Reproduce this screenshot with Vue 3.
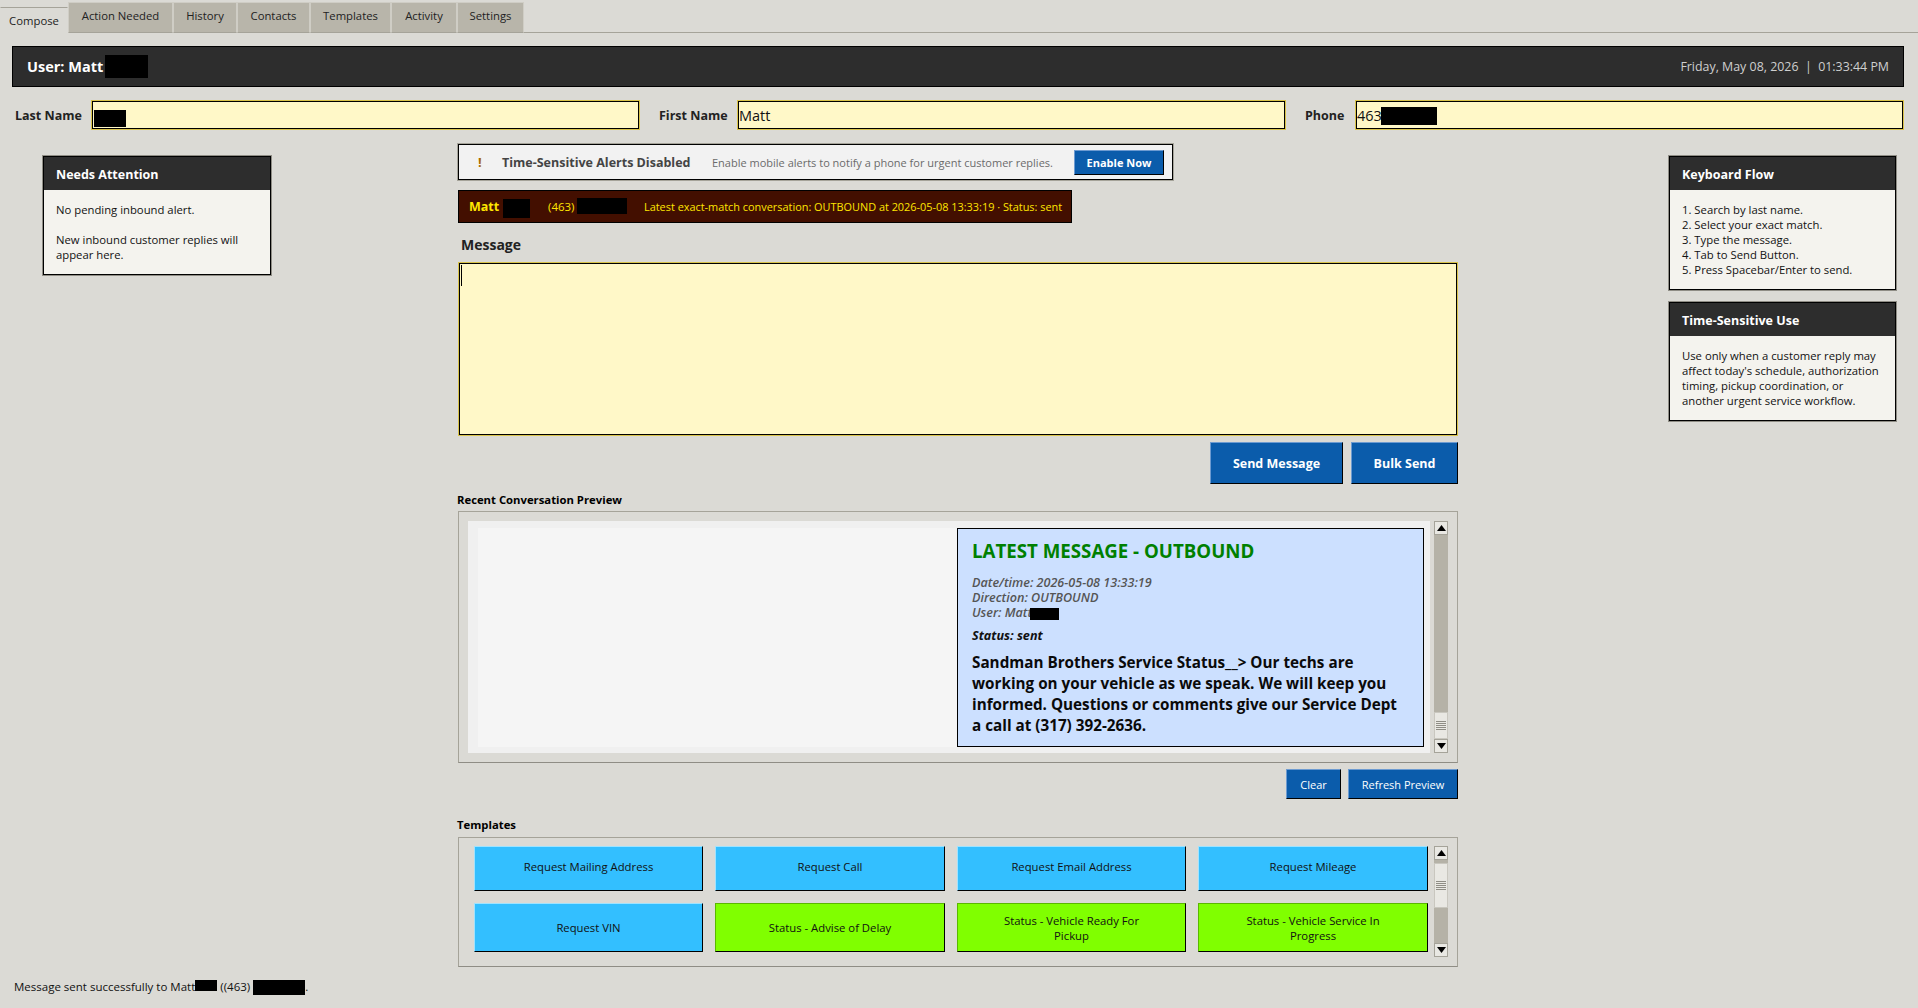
<template>
  <div class="page">
    <div class="tabs">
      <div
        v-for="tab in tabs"
        :key="tab.name"
        class="tab"
        :class="{ active: tab.name === activeTab }"
        :style="{ width: tab.width + 'px' }"
        @click="activeTab = tab.name"
      >{{ tab.name }}</div>
    </div>

    <div class="content">
      <div class="user-bar">
        <div class="user-name">User: Matt<span class="redact user-redact"></span></div>
        <div class="clock">Friday, May 08, 2026&nbsp; |&nbsp; 01:33:44 PM</div>
      </div>

      <div class="fields">
        <label class="field-label last-label">Last Name</label>
        <div class="field last-field">
          <input class="field-input" type="text" value="">
          <span class="redact last-redact"></span>
        </div>
        <label class="field-label first-label">First Name</label>
        <div class="field first-field">
          <input class="field-input" type="text" value="Matt">
        </div>
        <label class="field-label phone-label">Phone</label>
        <div class="field phone-field">
          <input class="field-input" type="text" value="463">
          <span class="redact phone-redact"></span>
        </div>
      </div>

      <div class="body">
        <aside class="left-col">
          <section class="panel">
            <h3 class="panel-title">Needs Attention</h3>
            <div class="panel-body attention-body">
              <p>No pending inbound alert.</p>
              <p>New inbound customer replies will appear here.</p>
            </div>
          </section>
        </aside>

        <main class="center-col">
          <div class="alert-bar">
            <span class="alert-mark">!</span>
            <span class="alert-title">Time-Sensitive Alerts Disabled</span>
            <span class="alert-text">Enable mobile alerts to notify a phone for urgent customer replies.</span>
            <button class="btn enable-btn">Enable Now</button>
          </div>

          <div class="match-bar">
            <span class="match-name">Matt</span>
            <span class="redact match-redact-a"></span>
            <span class="match-phone">(463)</span>
            <span class="redact match-redact-b"></span>
            <span class="match-info">Latest exact-match conversation: OUTBOUND at 2026-05-08 13:33:19 · Status: sent</span>
          </div>

          <div class="message-label">Message</div>
          <div class="message-wrap">
            <textarea class="message-input"></textarea>
            <span class="caret"></span>
          </div>

          <div class="send-row">
            <button class="btn send-btn">Send Message</button>
            <button class="btn bulk-btn">Bulk Send</button>
          </div>

          <div class="section-label recent-label">Recent Conversation Preview</div>
          <div class="preview-box">
            <div class="preview-view">
              <div class="preview-inner">
                <div class="message-card">
                  <div class="card-title">LATEST MESSAGE - OUTBOUND</div>
                  <div class="card-meta">Date/time: 2026-05-08 13:33:19</div>
                  <div class="card-meta">Direction: OUTBOUND</div>
                  <div class="card-meta">User: Matt<span class="redact card-redact"></span></div>
                  <div class="card-status">Status: sent</div>
                  <div class="card-text">Sandman Brothers Service Status__&gt; Our techs are working on your vehicle as we speak. We will keep you informed. Questions or comments give our Service Dept a call at (317) 392-2636.</div>
                </div>
              </div>
            </div>
            <div class="scrollbar preview-scroll">
              <div class="sb-arrow">
                <svg width="9" height="6" viewBox="0 0 9 6"><path d="M4.5 0L9 6H0z" /></svg>
              </div>
              <div class="sb-track" style="flex: 178 0 0"></div>
              <div class="sb-thumb" style="flex: 25 0 0">
                <i></i><i></i><i></i><i></i><i></i>
              </div>
              <div class="sb-arrow">
                <svg width="9" height="6" viewBox="0 0 9 6"><path d="M0 0H9L4.5 6z" /></svg>
              </div>
            </div>
          </div>

          <div class="preview-actions">
            <button class="btn small-btn clear-btn">Clear</button>
            <button class="btn small-btn refresh-btn">Refresh Preview</button>
          </div>

          <div class="section-label templates-label">Templates</div>
          <div class="templates-box">
            <div class="templates-grid">
              <button
                v-for="t in templates"
                :key="t.label"
                class="template-btn"
                :class="t.kind"
              >{{ t.label }}</button>
            </div>
            <div class="scrollbar templates-scroll">
              <div class="sb-arrow">
                <svg width="9" height="6" viewBox="0 0 9 6"><path d="M4.5 0L9 6H0z" /></svg>
              </div>
              <div class="sb-track" style="flex: 3 0 0"></div>
              <div class="sb-thumb" style="flex: 44 0 0">
                <i></i><i></i><i></i><i></i><i></i>
              </div>
              <div class="sb-track" style="flex: 36 0 0"></div>
              <div class="sb-arrow">
                <svg width="9" height="6" viewBox="0 0 9 6"><path d="M0 0H9L4.5 6z" /></svg>
              </div>
            </div>
          </div>
        </main>

        <aside class="right-col">
          <section class="panel">
            <h3 class="panel-title">Keyboard Flow</h3>
            <div class="panel-body">
              <div v-for="step in steps" :key="step">{{ step }}</div>
            </div>
          </section>
          <section class="panel">
            <h3 class="panel-title">Time-Sensitive Use</h3>
            <div class="panel-body">
              Use only when a customer reply may<br>
              affect today's schedule, authorization<br>
              timing, pickup coordination, or<br>
              another urgent service workflow.
            </div>
          </section>
        </aside>
      </div>

      <div class="status-line">
        Message sent successfully to Matt<span class="redact status-redact-a"></span> ((463) <span class="redact status-redact-b"></span>.
      </div>
    </div>
  </div>
</template>

<script setup>
import { ref } from 'vue'

const activeTab = ref('Compose')

const tabs = [
  { name: 'Compose', width: 68 },
  { name: 'Action Needed', width: 105 },
  { name: 'History', width: 64 },
  { name: 'Contacts', width: 73 },
  { name: 'Templates', width: 81 },
  { name: 'Activity', width: 66 },
  { name: 'Settings', width: 67 }
]

const steps = [
  '1. Search by last name.',
  '2. Select your exact match.',
  '3. Type the message.',
  '4. Tab to Send Button.',
  '5. Press Spacebar/Enter to send.'
]

const templates = [
  { label: 'Request Mailing Address', kind: 'blue' },
  { label: 'Request Call', kind: 'blue' },
  { label: 'Request Email Address', kind: 'blue' },
  { label: 'Request Mileage', kind: 'blue' },
  { label: 'Request VIN', kind: 'blue' },
  { label: 'Status - Advise of Delay', kind: 'green' },
  { label: 'Status - Vehicle Ready For Pickup', kind: 'green' },
  { label: 'Status - Vehicle Service In Progress', kind: 'green' }
]
</script>

<style>
html, body {
  margin: 0;
  background: #dbdad5;
}
</style>

<style scoped>
* {
  box-sizing: border-box;
}

.page {
  width: 1918px;
  height: 1008px;
  overflow: hidden;
  background: #dbdad5;
  font-family: "Open Sans", "Noto Sans", sans-serif;
  font-size: 11.3px;
  color: #111;
}

/* Tabs */
.tabs {
  display: flex;
  align-items: flex-end;
  height: 33px;
  border-bottom: 1px solid #a5a399;
}

.tab {
  height: 31px;
  margin-bottom: -1px;
  padding-bottom: 4px;
  display: flex;
  align-items: center;
  justify-content: center;
  background: #b8b5aa;
  border: 1px solid #cfcdc5;
  border-bottom-color: #a5a399;
  color: #222;
  cursor: pointer;
}

.tab.active {
  height: 26px;
  padding-bottom: 0;
  background: #dbdad5;
  border-color: #a5a399 transparent transparent;
  border-top-width: 1px;
}

.content {
  padding: 13px 14px 0 12px;
}

/* User bar */
.user-bar {
  height: 41px;
  display: flex;
  align-items: center;
  justify-content: space-between;
  padding: 0 14px;
  background: #2d2d2d;
  border: 1px solid #000;
  color: #fff;
}

.user-name {
  display: flex;
  align-items: center;
  font-size: 14.5px;
  font-weight: 700;
}

.user-redact {
  width: 43px;
  height: 23px;
  margin-left: 2px;
}

.clock {
  font-size: 12.4px;
  color: #cfcfcf;
}

.redact {
  display: inline-block;
  background: #000;
}

/* Search fields */
.fields {
  display: flex;
  align-items: center;
  height: 30px;
  margin-top: 13px;
}

.field-label {
  font-size: 12.5px;
  font-weight: 700;
  color: #222;
  white-space: nowrap;
}

.last-label {
  width: 79px;
  padding-left: 3px;
}

.first-label {
  width: 78px;
  margin-left: 19px;
}

.phone-label {
  width: 50px;
  margin-left: 19px;
}

.field {
  position: relative;
  height: 30px;
  width: 549px;
}

.field-input {
  width: 100%;
  height: 100%;
  padding: 0 1px;
  background: #fff8c8;
  border: 1px solid #000;
  outline: 1px solid #d9c34a;
  outline-offset: -1px;
  box-shadow: inset 0 0 0 1px #000;
  font-family: inherit;
  font-size: 14.5px;
  color: #111;
}

.field .redact {
  position: absolute;
}

.last-redact {
  left: 3px;
  top: 10px;
  width: 32px;
  height: 17px;
}

.phone-redact {
  left: 26px;
  top: 7px;
  width: 56px;
  height: 18px;
}

/* Body columns */
.body {
  display: grid;
  grid-template-columns: 446px 1000px 1fr;
  height: 823px;
  margin-top: 14px;
}

.left-col {
  padding: 12px 0 0 31px;
}

.left-col .panel {
  width: 228px;
}

.right-col {
  padding: 12px 0 0 211px;
  display: flex;
  flex-direction: column;
  gap: 12px;
}

.right-col .panel {
  width: 227px;
}

.panel {
  border: 1px solid #000;
  outline: 1px solid #8f8d85;
  background: #f4f3ee;
}

.panel-title {
  margin: 0;
  height: 33px;
  padding: 2px 12px 0;
  display: flex;
  align-items: center;
  background: #2d2d2d;
  color: #fff;
  font-size: 12.5px;
  font-weight: 700;
}

.panel-body {
  padding: 12px 12px 12px;
  line-height: 15px;
}

.panel-body p {
  margin: 0;
}

.attention-body p + p {
  margin-top: 15px;
}

/* Center column */
.center-col {
  display: flex;
  flex-direction: column;
  min-width: 0;
}

.alert-bar {
  width: 715px;
  height: 36px;
  display: flex;
  align-items: center;
  padding: 0 8px 0 19px;
  background: #f2f2f2;
  border: 1px solid #000;
  outline: 1px solid #a5a399;
}

.alert-mark {
  width: 24px;
  font-weight: 700;
  font-size: 13px;
  color: #a86a00;
}

.alert-title {
  width: 210px;
  font-size: 12.5px;
  font-weight: 700;
  color: #444;
  white-space: nowrap;
}

.alert-text {
  flex: 1;
  font-size: 11px;
  color: #6b6b6b;
  white-space: nowrap;
}

.btn {
  display: flex;
  align-items: center;
  justify-content: center;
  padding: 0;
  background: #0b5cab;
  border: 1px solid #000;
  border-top-color: #6d9bd1;
  border-left-color: #6d9bd1;
  color: #fff;
  font-family: inherit;
  font-weight: 700;
  cursor: pointer;
}

.enable-btn {
  width: 90px;
  height: 25px;
  font-size: 11px;
}

.match-bar {
  width: 614px;
  height: 33px;
  margin-top: 10px;
  display: flex;
  align-items: center;
  padding-left: 10px;
  background: #430f00;
  border: 1px solid #000;
  color: #ffe600;
  font-size: 10.9px;
  white-space: nowrap;
}

.match-name {
  width: 34px;
  font-size: 12.5px;
  font-weight: 700;
}

.match-redact-a {
  width: 27px;
  height: 19px;
  margin-right: 18px;
  margin-top: 4px;
}

.match-phone {
  width: 29px;
  font-size: 11.5px;
}

.match-redact-b {
  width: 50px;
  height: 16px;
  margin-right: 17px;
  margin-bottom: 2px;
}

.message-label {
  height: 39px;
  padding: 12px 0 0 3px;
  font-size: 14px;
  font-weight: 700;
  color: #222;
}

.message-wrap {
  position: relative;
  height: 174px;
}

.message-input {
  display: block;
  width: 100%;
  height: 100%;
  resize: none;
  background: #fff8c8;
  border: 1px solid #000;
  outline: 1px solid #d9c34a;
  outline-offset: -1px;
  box-shadow: inset 0 0 0 1px #000;
}

.caret {
  position: absolute;
  left: 3px;
  top: 3px;
  width: 1px;
  height: 21px;
  background: #000;
}

.send-row {
  display: flex;
  justify-content: flex-end;
  gap: 8px;
  margin-top: 6px;
}

.send-btn,
.bulk-btn {
  height: 42px;
  font-size: 12.5px;
}

.send-btn {
  width: 133px;
}

.bulk-btn {
  width: 107px;
}

.section-label {
  font-size: 11.3px;
  font-weight: 700;
  color: #000;
  margin-left: -1px;
}

.recent-label {
  height: 27px;
  padding-top: 8px;
}

.preview-box {
  height: 252px;
  display: flex;
  gap: 4px;
  padding: 9px;
  border: 1px solid #a5a399;
  border-bottom-color: #8f8d85;
}

.preview-view {
  flex: 1;
  padding: 7px 6px 6px 10px;
  background: #f0f0f0;
}

.preview-inner {
  height: 100%;
  display: flex;
  justify-content: flex-end;
  background: #f5f5f5;
}

.message-card {
  width: 467px;
  padding: 10px 14px 0;
  background: #cce0ff;
  border: 1px solid #000;
}

.card-title {
  font-size: 18.7px;
  font-weight: 700;
  line-height: 24px;
  color: #008000;
  white-space: nowrap;
}

.card-meta,
.card-status {
  font-size: 12.6px;
  font-style: italic;
  font-weight: 600;
  line-height: 15px;
  color: #555;
  white-space: nowrap;
}

.card-title + .card-meta {
  margin-top: 12px;
}

.card-redact {
  width: 29px;
  height: 12px;
  margin-left: -2px;
  vertical-align: middle;
}

.card-status {
  margin-top: 8px;
  font-weight: 700;
  color: #111;
}

.card-text {
  margin-top: 9px;
  font-size: 15.25px;
  font-weight: 700;
  line-height: 21px;
  color: #0a0a0a;
}

/* Scrollbars */
.scrollbar {
  width: 14px;
  flex: none;
  display: flex;
  flex-direction: column;
  background: #b5b2a7;
}

.sb-arrow {
  height: 14px;
  flex: none;
  display: flex;
  align-items: center;
  justify-content: center;
  background: #e9e8e3;
  border: 1px solid #a5a399;
}

.sb-arrow path {
  fill: #000;
}

.sb-track {
  min-height: 0;
}

.sb-thumb {
  display: flex;
  flex-direction: column;
  align-items: center;
  justify-content: center;
  gap: 1px;
  background: #e9e8e3;
  border: 1px solid #c9c7bf;
}

.sb-thumb i {
  display: block;
  width: 10px;
  height: 1px;
  background: #8f8d85;
}

.preview-actions {
  display: flex;
  justify-content: flex-end;
  gap: 7px;
  margin-top: 6px;
}

.small-btn {
  height: 30px;
  font-size: 11px;
  font-weight: 400;
}

.clear-btn {
  width: 55px;
}

.refresh-btn {
  width: 110px;
}

.templates-label {
  height: 38px;
  padding-top: 18px;
}

.templates-box {
  height: 130px;
  display: flex;
  gap: 6px;
  padding: 8px 9px 9px 15px;
  border: 1px solid #a5a399;
  border-bottom-color: #8f8d85;
}

.templates-grid {
  flex: 1;
  display: grid;
  grid-template-columns: 229px 230px 229px 230px;
  grid-template-rows: 45px 49px;
  gap: 12px;
}

.template-btn {
  padding: 0 30px;
  border: 1px solid #000;
  border-top-color: #9fe3ff;
  border-left-color: #9fe3ff;
  font-family: inherit;
  font-size: 11.3px;
  line-height: 15px;
  color: #111;
  cursor: pointer;
}

.template-btn:nth-child(-n+4) {
  padding-bottom: 4px;
}

.template-btn.blue {
  background: #33bfff;
}

.template-btn.green {
  background: #80ff00;
  border-top-color: #5ab800;
  border-left-color: #5ab800;
}

.status-line {
  margin-top: 12px;
  padding-left: 2px;
  font-size: 11.5px;
  line-height: 16px;
  white-space: nowrap;
}

.status-redact-a {
  width: 22px;
  height: 11px;
}

.status-redact-b {
  width: 52px;
  height: 15px;
  vertical-align: middle;
}
</style>
